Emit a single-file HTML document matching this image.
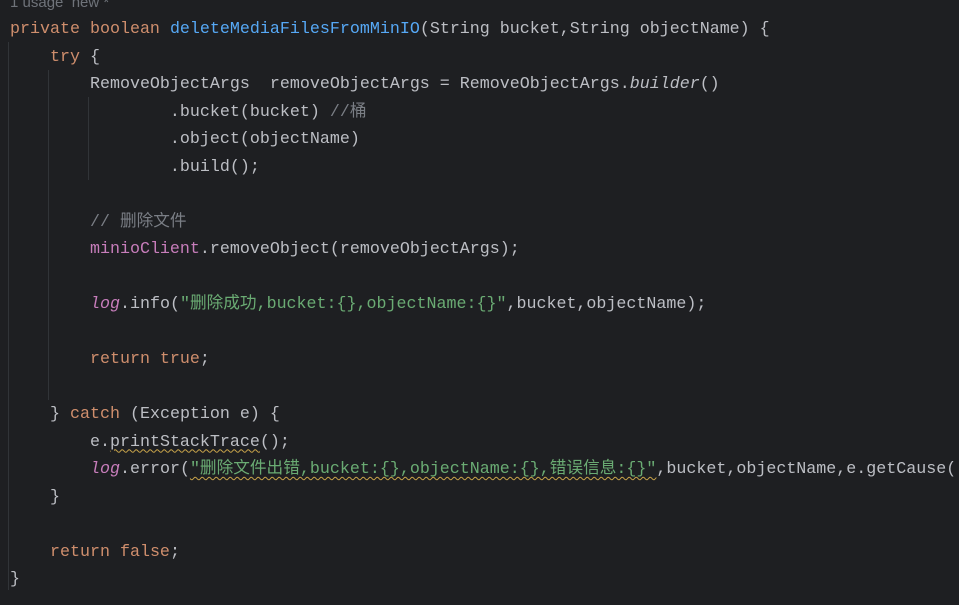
<!DOCTYPE html>
<html><head><meta charset="utf-8"><style>
html,body{margin:0;padding:0;background:#1e1f22;width:959px;height:605px;overflow:hidden}
.c{position:absolute;left:10px;top:-11.5px;font-family:"Liberation Mono","Noto Sans CJK SC",monospace;font-size:16.67px;color:#bcbec4}
.l{height:27.5px;line-height:27.5px;white-space:pre;overflow:visible}
.k{color:#cf8e6d}.m{color:#56a8f5}.s{color:#6aab73}.g{color:#7a7e85}.f{color:#c77dbb}.i{font-style:italic}
.w{text-decoration:underline wavy #c9a44a;text-decoration-thickness:1px;text-underline-offset:3px}
.u{color:#6f737a;font-family:"Liberation Sans",sans-serif;font-size:15px}
.v{position:absolute;width:1px;background:#313438}
</style></head><body>
<div class="v" style="left:8px;top:42px;height:548px"></div>
<div class="v" style="left:48px;top:70px;height:330px"></div>
<div class="v" style="left:88px;top:97px;height:83px"></div>
<div class="c">
<div class="l"><span class="u">1 usage  new *</span></div>
<div class="l"><span class="k">private boolean </span><span class="m">deleteMediaFilesFromMinIO</span>(String bucket,String objectName) {</div>
<div class="l">    <span class="k">try</span> {</div>
<div class="l">        RemoveObjectArgs  removeObjectArgs = RemoveObjectArgs.<span class="i">builder</span>()</div>
<div class="l">                .bucket(bucket) <span class="g">//桶</span></div>
<div class="l">                .object(objectName)</div>
<div class="l">                .build();</div>
<div class="l"> </div>
<div class="l">        <span class="g">// 删除文件</span></div>
<div class="l">        <span class="f">minioClient</span>.removeObject(removeObjectArgs);</div>
<div class="l"> </div>
<div class="l">        <span class="f i">log</span>.info(<span class="s">"删除成功,bucket:{},objectName:{}"</span>,bucket,objectName);</div>
<div class="l"> </div>
<div class="l">        <span class="k">return true</span>;</div>
<div class="l"> </div>
<div class="l">    } <span class="k">catch</span> (Exception e) {</div>
<div class="l">        e.<span class="w">printStackTrace</span>();</div>
<div class="l">        <span class="f i">log</span>.error(<span class="s w">"删除文件出错,bucket:{},objectName:{},错误信息:{}"</span>,bucket,objectName,e.getCause());</div>
<div class="l">    }</div>
<div class="l"> </div>
<div class="l">    <span class="k">return false</span>;</div>
<div class="l">}</div>
</div>
</body></html>
